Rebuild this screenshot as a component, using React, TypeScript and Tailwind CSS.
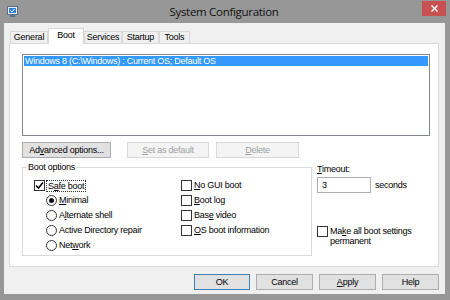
import React from "react";

const Check = ({ checked }: { checked?: boolean }) => (
  <span className="w-[11px] h-[11px] border border-[#333333] bg-white flex items-center justify-center shrink-0">
    {checked && (
      <svg width="9" height="9" viewBox="0 0 9 9">
        <path d="M1 4.5 L3.5 7 L8 1.5" fill="none" stroke="#000" strokeWidth="1.6" />
      </svg>
    )}
  </span>
);

const Radio = ({ checked }: { checked?: boolean }) => (
  <span className="w-[11px] h-[11px] rounded-full border border-[#333333] bg-white flex items-center justify-center shrink-0">
    {checked && <span className="w-[5px] h-[5px] rounded-full bg-[#111111]" />}
  </span>
);

const U = ({ children }: { children: React.ReactNode }) => <span className="underline underline-offset-1">{children}</span>;

const Tab = ({ label, active, w }: { label: string; active?: boolean; w: string }) =>
  active ? (
    <div className={`${w} h-[16px] -mb-px relative z-10 bg-white border border-b-0 border-[#d9d9d9] flex items-start justify-center pt-[1px] whitespace-nowrap`}>
      {label}
    </div>
  ) : (
    <div className={`${w} h-[12px] bg-[#f0f0f0] border border-b-0 border-[#d9d9d9] flex items-center justify-center whitespace-nowrap`}>
      {label}
    </div>
  );

const Btn = ({ children, w, disabled, focus }: { children: React.ReactNode; w: string; disabled?: boolean; focus?: boolean }) => (
  <div
    className={`${w} h-[16px] flex items-center justify-center border whitespace-nowrap ${
      disabled ? "border-[#d9d9d9] bg-[#f4f4f4] text-[#a0a0a0]" : focus ? "border-[#3c7fb1] bg-[#e1e1e1]" : "border-[#adadad] bg-[#e1e1e1]"
    }`}
  >
    <span>{children}</span>
  </div>
);

export default function App() {
  return (
    <div className="w-[450px] h-[300px] bg-[#979797] flex flex-col text-[9px] leading-[11px] tracking-[-0.25px] text-black font-['Liberation_Sans',Arial,sans-serif] overflow-hidden">
      {/* Title bar */}
      <div className="h-[23px] flex items-start relative shrink-0">
        <svg className="ml-[7px] mt-[6px]" width="11" height="11" viewBox="0 0 11 11">
          <rect x="0.5" y="0.5" width="10" height="8" fill="#e8eef5" stroke="#5a6e86" />
          <rect x="2" y="2" width="7" height="5" fill="#2f7fd6" />
          <path d="M3.5 4.5 L5 6 L7.5 3" fill="none" stroke="#fff" strokeWidth="1" />
          <rect x="3" y="9" width="5" height="2" fill="#5a6e86" />
        </svg>
        <div className="flex-1 text-center text-[11.5px] leading-[14px] mt-[5px] pl-[8px] text-[#111111] font-['Open_Sans',sans-serif] tracking-[-0.3px]">
          System Configuration
        </div>
        <div className="w-[24px] h-[15px] mt-[1px] mr-[4px] bg-[#c75050] flex items-center justify-center">
          <svg width="7" height="7" viewBox="0 0 7 7">
            <path d="M0.5 0.5 L6.5 6.5 M6.5 0.5 L0.5 6.5" stroke="#fff" strokeWidth="1.5" />
          </svg>
        </div>
      </div>

      {/* Client */}
      <div className="ml-[4px] mr-[5px] h-[271px] bg-[#f0f0f0] flex flex-col pt-[6px] pl-[5px] pr-[2px]">
        <div className="flex items-end pl-[1px] h-[14px]">
          <Tab label="General" w="w-[38px]" />
          <Tab label="Boot" w="w-[36px]" active />
          <Tab label="Services" w="w-[38px]" />
          <Tab label="Startup" w="w-[37px]" />
          <Tab label="Tools" w="w-[31px]" />
        </div>
        <div className="w-[430px] h-[224px] bg-white border border-[#d9d9d9] flex flex-col pl-[12px] pt-[10px]">
          {/* Boot entries list */}
          <div className="w-[408px] h-[82px] border border-[#828790] bg-white p-[1px]">
            <div className="h-[10px] bg-[#3399ff] text-white flex items-center pl-[1px] leading-[10px]">
              Windows 8 (C:\Windows) : Current OS; Default OS
            </div>
          </div>

          <div className="flex mt-[6px]">
            <Btn w="w-[89px]">
              Ad<U>v</U>anced options...
            </Btn>
            <div className="w-[16px]" />
            <Btn w="w-[82px]" disabled>
              <U>S</U>et as default
            </Btn>
            <div className="w-[7px]" />
            <Btn w="w-[83px]" disabled>
              <U>D</U>elete
            </Btn>
          </div>

          <div className="flex mt-[4px]">
            <fieldset className="w-[290px] h-[94px] border border-[#d9d9d9] pl-[11px] pt-[7px]">
              <legend className="ml-[-7px] px-[1px]">Boot options</legend>
              <div className="flex">
                <div className="w-[147px] flex flex-col gap-[4px]">
                  <div className="flex items-center gap-[1px] h-[11px]">
                    <Check checked />
                    <span className="outline outline-1 outline-dotted outline-[#333333] px-[1px] ml-[1px] leading-[10px]">
                      S<U>a</U>fe boot
                    </span>
                  </div>
                  <div className="flex items-center gap-[2px] h-[11px] pl-[12px]">
                    <Radio checked />
                    <span>
                      <U>M</U>inimal
                    </span>
                  </div>
                  <div className="flex items-center gap-[2px] h-[11px] pl-[12px]">
                    <Radio />
                    <span>
                      A<U>l</U>ternate shell
                    </span>
                  </div>
                  <div className="flex items-center gap-[2px] h-[11px] pl-[12px]">
                    <Radio />
                    <span>Active Directory repair</span>
                  </div>
                  <div className="flex items-center gap-[2px] h-[11px] pl-[12px]">
                    <Radio />
                    <span>
                      Net<U>w</U>ork
                    </span>
                  </div>
                </div>
                <div className="flex flex-col gap-[4px]">
                  <div className="flex items-center gap-[2px] h-[11px]">
                    <Check />
                    <span>
                      <U>N</U>o GUI boot
                    </span>
                  </div>
                  <div className="flex items-center gap-[2px] h-[11px]">
                    <Check />
                    <span>
                      <U>B</U>oot log
                    </span>
                  </div>
                  <div className="flex items-center gap-[2px] h-[11px]">
                    <Check />
                    <span>
                      Bas<U>e</U> video
                    </span>
                  </div>
                  <div className="flex items-center gap-[2px] h-[11px]">
                    <Check />
                    <span>
                      <U>O</U>S boot information
                    </span>
                  </div>
                </div>
              </div>
            </fieldset>

            <div className="flex flex-col ml-[5px] mt-[2px]">
              <div>
                <U>T</U>imeout:
              </div>
              <div className="flex items-center mt-[2px]">
                <div className="w-[54px] h-[16px] border border-[#abadb3] bg-white flex items-center pl-[4px]">3</div>
                <span className="ml-[4px]">seconds</span>
              </div>
              <div className="flex items-start mt-[33px] gap-[2px]">
                <Check />
                <div className="leading-[10px]">
                  Ma<U>k</U>e all boot settings
                  <br />
                  permanent
                </div>
              </div>
            </div>
          </div>
        </div>

        {/* Dialog buttons */}
        <div className="flex justify-end gap-[6px] mt-[7px] pr-[4px]">
          <Btn w="w-[56px]" focus>
            OK
          </Btn>
          <Btn w="w-[57px]">Cancel</Btn>
          <Btn w="w-[57px]">
            <U>A</U>pply
          </Btn>
          <Btn w="w-[57px]">Help</Btn>
        </div>
      </div>
    </div>
  );
}
